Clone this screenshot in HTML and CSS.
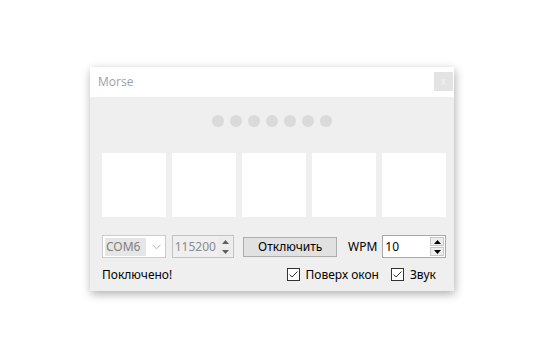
FILE: index.html
```html
<!DOCTYPE html>
<html>
<head>
<meta charset="utf-8">
<link rel="stylesheet" href="styles.css">
</head>
<body>
<div class="window">
  <div class="titlebar">
    <span class="title">Morse</span>
    <span class="close">x</span>
  </div>
  <div class="content">
    <div class="dots">
      <span class="dot"></span><span class="dot"></span><span class="dot"></span><span class="dot"></span><span class="dot"></span><span class="dot"></span><span class="dot"></span>
    </div>
    <div class="boxes">
      <div class="box"></div><div class="box"></div><div class="box"></div><div class="box"></div><div class="box"></div>
    </div>
    <div class="controls">
      <div class="combo">
        <span class="combo-text">COM6</span>
        <svg class="chev" width="9" height="6" viewBox="0 0 9 6"><path d="M0.5 0.8 L4.5 4.8 L8.5 0.8" fill="none" stroke="#b4b4b4" stroke-width="1"/></svg>
      </div>
      <div class="spin disabled">
        <span class="spin-text">115200</span>
        <div class="spin-btns">
          <span class="sb"><svg width="7" height="4" viewBox="0 0 7 4"><path d="M0 4 L3.5 0 L7 4Z" fill="#606060"/></svg></span>
          <span class="sb"><svg width="7" height="4" viewBox="0 0 7 4"><path d="M0 0 L3.5 4 L7 0Z" fill="#606060"/></svg></span>
        </div>
      </div>
      <div class="button">Отключить</div>
      <span class="label">WPM</span>
      <div class="spin wpm">
        <span class="spin-text">10</span>
        <div class="spin-btns">
          <span class="sb"><svg width="7" height="4" viewBox="0 0 7 4"><path d="M0 4 L3.5 0 L7 4Z" fill="#000"/></svg></span>
          <span class="sb"><svg width="7" height="4" viewBox="0 0 7 4"><path d="M0 0 L3.5 4 L7 0Z" fill="#000"/></svg></span>
        </div>
      </div>
    </div>
    <div class="status">
      <span class="status-text">Поключено!</span>
      <label class="check first"><span class="cb"><svg width="11" height="11" viewBox="0 0 11 11"><path d="M1.5 5.5 L4 8 L9.5 2.5" fill="none" stroke="#333" stroke-width="1"/></svg></span>Поверх окон</label>
      <label class="check last"><span class="cb"><svg width="11" height="11" viewBox="0 0 11 11"><path d="M1.5 5.5 L4 8 L9.5 2.5" fill="none" stroke="#333" stroke-width="1"/></svg></span>Звук</label>
    </div>
  </div>
</div>
</body>
</html>
```

FILE: styles.css
```css
html, body {
  margin: 0;
  background: #ffffff;
}
body {
  padding: 67px 0 0 90px;
  min-height: 343px;
  box-sizing: border-box;
  font-family: "Noto Sans", "DejaVu Sans", sans-serif;
  font-size: 12px;
  color: #000;
}
.window {
  width: 364px;
  height: 224px;
  background: #efefef;
  box-shadow: 1px 3px 9px rgba(0, 0, 0, 0.32);
  box-sizing: border-box;
  display: flex;
  flex-direction: column;
}
.titlebar {
  height: 30px;
  background: #ffffff;
  display: flex;
  align-items: center;
  justify-content: space-between;
  padding: 0 1px 0 8px;
  box-sizing: border-box;
}
.title {
  font-family: "Open Sans", "Noto Sans", sans-serif;
  font-size: 12px;
  color: #9aa0a8;
  margin-top: -2px;
}
.close {
  width: 19px;
  height: 19px;
  background: #e3e3e3;
  color: #f3f3f3;
  font-size: 10px;
  line-height: 18px;
  text-align: center;
  margin-top: -2px;
}
.content {
  padding: 18px 8px 0 12px;
  display: flex;
  flex-direction: column;
}
.dots {
  display: flex;
  gap: 6px;
  justify-content: center;
  margin-left: -4px;
}
.dot {
  width: 12px;
  height: 12px;
  border-radius: 50%;
  background: #dadada;
}
.boxes {
  display: flex;
  gap: 6px;
  margin-top: 26px;
}
.box {
  width: 64px;
  height: 64px;
  background: #ffffff;
}
.controls {
  display: flex;
  align-items: center;
  margin-top: 18px;
  height: 23px;
}
.combo {
  width: 64px;
  height: 23px;
  box-sizing: border-box;
  border: 1px solid #cccccc;
  background: #ffffff;
  display: flex;
  align-items: center;
  padding: 0 2px;
}
.combo-text {
  background: #e6e6e6;
  color: #7e7e7e;
  width: 41px;
  height: 18px;
  line-height: 18px;
  padding-left: 1px;
  box-sizing: border-box;
}
.chev {
  margin-left: 6px;
  margin-top: 1px;
}
.spin {
  height: 23px;
  box-sizing: border-box;
  border: 1px solid #b9b9b9;
  display: flex;
  align-items: center;
  justify-content: space-between;
  padding: 0 0 0 2px;
}
.spin.disabled {
  width: 63px;
  margin-left: 6px;
  background: #efefef;
  border-color: #c2c2c2;
}
.spin.disabled .spin-text {
  color: #8a8a8a;
}
.spin-btns {
  display: flex;
  flex-direction: column;
  gap: 1px;
  margin-right: 1px;
}
.sb {
  width: 14px;
  height: 9px;
  background: #e6e6e6;
  display: flex;
  align-items: center;
  justify-content: center;
  box-sizing: border-box;
}
.spin.disabled .sb {
  background: #ececec;
}
.spin.wpm {
  width: 64px;
  background: #ffffff;
  border-color: #a8a8a8;
  margin-left: 5px;
}
.spin.wpm .sb {
  border: 1px solid #c8c8c8;
  background: #ededed;
}
.button {
  width: 94px;
  height: 20px;
  box-sizing: border-box;
  margin-left: 9px;
  border: 1px solid #adadad;
  background: #e1e1e1;
  text-align: center;
  line-height: 18px;
}
.label {
  margin-left: 11px;
}
.status {
  display: flex;
  align-items: center;
  margin-top: 9px;
  height: 14px;
}
.status-text {
  flex: 1;
}
.check {
  display: flex;
  align-items: center;
}
.check.first {
  margin-right: 12px;
}
.check.last {
  margin-right: 10px;
}
.cb {
  width: 13px;
  height: 13px;
  box-sizing: border-box;
  border: 1px solid #333333;
  background: #ffffff;
  margin-right: 6px;
  display: flex;
  align-items: center;
  justify-content: center;
}
```
